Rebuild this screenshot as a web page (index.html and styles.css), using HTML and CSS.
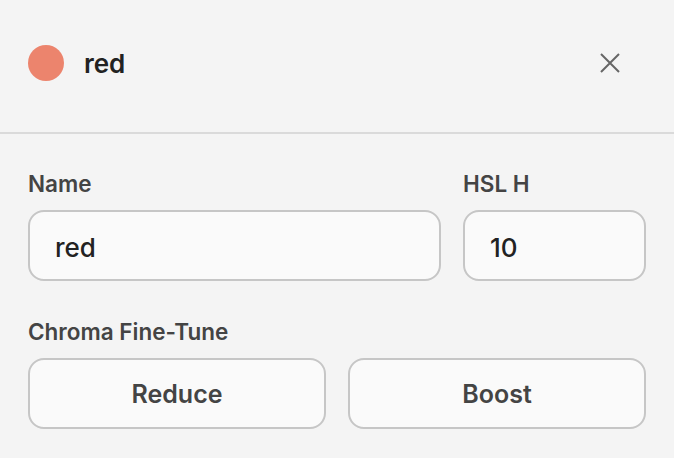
FILE: index.html
```html
<!DOCTYPE html>
<html lang="en">
<head>
<meta charset="utf-8">
<title>Color editor</title>
<link rel="stylesheet" href="styles.css">
</head>
<body>
<div class="panel">
  <header class="panel-header">
    <span class="swatch"></span>
    <span class="title">red</span>
    <button class="close" aria-label="Close">
      <svg width="20" height="20" viewBox="0 0 20 20" aria-hidden="true">
        <path d="M1 1 L19 19 M19 1 L1 19" stroke="#666" stroke-width="2" fill="none"/>
      </svg>
    </button>
  </header>
  <div class="panel-body">
    <div class="row row-fields">
      <div class="field">
        <label class="label">Name</label>
        <input class="input" type="text" value="red">
      </div>
      <div class="field">
        <label class="label">HSL H</label>
        <input class="input" type="text" value="10">
      </div>
    </div>
    <div class="section">
      <div class="label">Chroma Fine-Tune</div>
      <div class="row row-buttons">
        <button class="btn">Reduce</button>
        <button class="btn">Boost</button>
      </div>
    </div>
  </div>
</div>
</body>
</html>
```
FILE: styles.css
```css
* { box-sizing: border-box; }
html, body {
  margin: 0;
  padding: 0;
  background: #f4f4f4;
  font-family: Inter, "Noto Sans", "Liberation Sans", sans-serif;
}
.panel {
  width: 674px;
  height: 458px;
  background: #f4f4f4;
}
.panel-header {
  display: flex;
  align-items: center;
  height: 134px;
  padding: 0 44px 6px 28px;
  border-bottom: 2px solid #dadada;
}
.swatch {
  width: 36px;
  height: 36px;
  border-radius: 50%;
  background: #ec846d;
  flex: none;
}
.title {
  margin-left: 20px;
  font-size: 26px;
  font-weight: 600;
  color: #222;
  flex: 1;
}
.close {
  width: 40px;
  height: 40px;
  padding: 0;
  border: none;
  background: transparent;
  display: flex;
  align-items: center;
  justify-content: center;
}
.panel-body {
  padding: 36px 28px 0;
}
.row {
  display: grid;
  column-gap: 22px;
}
.row-fields {
  grid-template-columns: 413px 1fr;
}
.row-buttons {
  grid-template-columns: 1fr 1fr;
}
.field {
  display: flex;
  flex-direction: column;
}
.label {
  display: block;
  font-size: 22.5px;
  line-height: 28px;
  font-weight: 600;
  color: #444;
  margin-bottom: 12px;
}
.input {
  height: 71px;
  width: 100%;
  border: 2px solid #c6c6c6;
  border-radius: 16px;
  background: #fafafa;
  padding: 3px 24px 0 25px;
  font-family: inherit;
  font-size: 26px;
  font-weight: 550;
  color: #222;
  outline: none;
}
.section {
  margin-top: 37px;
}
.btn {
  height: 71px;
  border: 2px solid #c6c6c6;
  border-radius: 16px;
  background: #fafafa;
  font-family: inherit;
  font-size: 25px;
  font-weight: 600;
  color: #444;
  padding: 0;
}
```
